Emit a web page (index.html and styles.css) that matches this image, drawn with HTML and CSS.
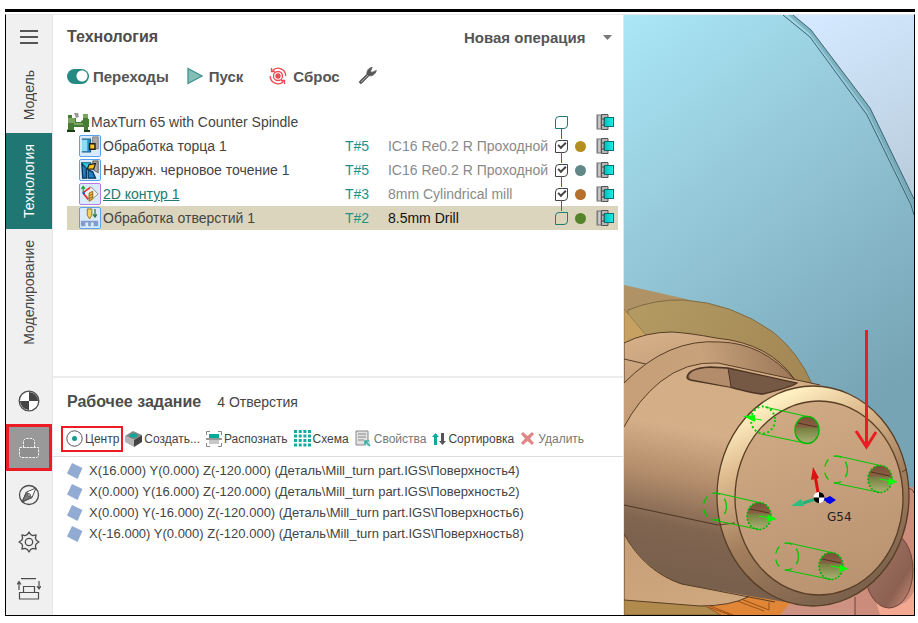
FILE: index.html
```html
<!DOCTYPE html>
<html lang="ru">
  <head>
    <meta charset="utf-8" />
    <meta name="viewport" content="width=device-width, initial-scale=1" />
    <title>Технология</title>
    <link rel="stylesheet" href="styles.css">
  </head>
  <body>
    <!-- Общие иконки -->
    <svg class="sprite" aria-hidden="true">
      <defs>
        <linearGradient id="metal" x1="0" y1="0" x2="1" y2="0">
          <stop offset="0" stop-color="#666" />
          <stop offset=".4" stop-color="#ddd" />
          <stop offset="1" stop-color="#777" />
        </linearGradient>
        <linearGradient id="cyan" x1="0" y1="0" x2="1" y2="0">
          <stop offset="0" stop-color="#00bfb8" />
          <stop offset="1" stop-color="#1cf0ea" />
        </linearGradient>
      </defs>
      <symbol id="chuck" viewBox="0 0 18 18">
        <rect x="1" y="2" width="5" height="14" fill="url(#metal)" stroke="#777" />
        <path d="M5.500 1.500H12V5H8V13H12V16.500H5.500Z" fill="#b5b5b5" stroke="#555" />
        <path d="M6 6h4M6 12h4" stroke="#444" />
        <rect x="8.500" y="4.500" width="9" height="9" fill="url(#cyan)" stroke="#0f6f70" />
      </symbol>
      <symbol id="surface" viewBox="0 0 16 18">
        <path d="M5 1 15.500 6 10.500 17 0 11.500Z" fill="#92abd3" />
      </symbol>
    </svg>

    <div class="page">
      <div class="app">
        <!-- Боковая панель -->
        <nav class="sidebar" aria-label="Разделы">
          <button class="sidebar__menu" aria-label="Меню">
            <svg width="18" height="14" viewBox="0 0 18 14"><path d="M0 1h18M0 7h18M0 13h18" stroke="#555" stroke-width="2" /></svg>
          </button>
          <button class="tab"><span>Модель</span></button>
          <button class="tab tab--active"><span>Технология</span></button>
          <button class="tab"><span>Моделирование</span></button>

          <div class="sidebar__tools">
            <button class="tool" aria-label="Система координат">
              <svg width="22" height="22" viewBox="0 0 22 22">
                <circle cx="11" cy="11" r="9.800" fill="#fff" stroke="#4c4c4c" stroke-width="1.300" />
                <path d="M11 11V2a9 9 0 0 1 9 9ZM11 11v9a9 9 0 0 1-9-9Z" fill="#444" />
              </svg>
            </button>
            <button class="tool tool--active" aria-label="Рабочее задание">
              <svg width="20" height="22" viewBox="0 0 20 22" fill="#8f8f8f" stroke="#f4f4f4" stroke-dasharray="2.500 1">
                <path d="M4.500 10.500v-7l2-2h7l2 2v7Z" />
                <path d="M.5 10.500h19v8l-1.500 2H2l-1.500-2Z" />
              </svg>
            </button>
            <button class="tool" aria-label="Подходы">
              <svg width="22" height="22" viewBox="0 0 22 22" stroke="#4c4c4c">
                <circle cx="11" cy="11" r="9.500" fill="none" stroke-width="1.300" />
                <path d="M18 4 8.500 8 4 18 14 13.500Z" fill="#fff" />
                <path d="M4 18 8.500 8 14 13.500Z" fill="#777" />
                <circle cx="11" cy="11" r="1.300" fill="#fff" />
              </svg>
            </button>
            <button class="tool" aria-label="Параметры">
              <svg width="22" height="22" viewBox="0 0 22 22" fill="none" stroke="#4c4c4c" stroke-width="1.300" stroke-linejoin="round">
                <path d="M9.300 3.700 11 1l1.700 2.700 2.300.9 3.100-.7-.7 3.100.9 2.300L21 11l-2.700 1.700-.9 2.300.7 3.100-3.100-.7-2.300.9L11 21l-1.700-2.700-2.300-.9-3.100.7.7-3.100-.9-2.300L1 11l2.700-1.700.9-2.300-.7-3.100 3.100.7Z" />
                <circle cx="11" cy="11" r="3.700" />
              </svg>
            </button>
            <button class="tool" aria-label="Подвод и отвод">
              <svg width="24" height="22" viewBox="0 0 24 22" fill="none" stroke="#4c4c4c" stroke-width="1.200">
                <path d="M4 .7h15M6.500 14V8.500h11V14M2.500 14.500h19v6.500h-19ZM2 12V4M0 6.500 2 3.500l2 3M22 3v8M20 8l2 3 2-3" />
              </svg>
            </button>
          </div>
        </nav>

        <main class="panel">
          <!-- Операции -->
          <section class="operations">
            <header class="operations__head">
              <h1 class="title">Технология</h1>
              <div class="dropdown">
                <select class="dropdown__select" aria-label="Новая операция">
                  <option>Новая операция</option>
                </select>
                <svg class="dropdown__arrow" width="9" height="5" viewBox="0 0 9 5"><path d="M0 0h9L4.500 5Z" fill="#777" /></svg>
              </div>
            </header>

            <div class="actions">
              <label class="action action--switch"><input class="switch" type="checkbox" checked>Переходы</label>
              <button class="action action--run">
                <svg width="16" height="18" viewBox="0 0 16 18"><path d="M1 1.500 15 9 1 16.500Z" fill="#83beb7" stroke="#3d958c" stroke-width="1.300" /></svg>Пуск
              </button>
              <button class="action action--reset">
                <svg width="18" height="18" viewBox="0 0 18 18" fill="none" stroke="#ec4a50" stroke-width="1.300">
                  <circle cx="9" cy="9" r="4.500" /><circle cx="9" cy="9" r="2" fill="#ec4a50" />
                  <path d="M3.500 3.500a7.800 7.800 0 0 1 13.300 5.500M14.500 14.500A7.800 7.800 0 0 1 1.200 9M2.500 1v3.500H6M15.500 17v-3.500H12" />
                </svg>Сброс
              </button>
              <button class="action" aria-label="Настройка">
                <svg width="20" height="20" viewBox="0 0 20 20"><path d="M2.500 17.500 9.500 10M18.300 4.500c-1.200 4-4 5.800-7.300 5.200L4 17c-1.500 1.500-3.500-.5-2.200-2L9 8.200C8.500 4.800 10.500 2 14.200 1.400L12.500 5l1.300 1.600Z" fill="#555" stroke="#666" /><path d="m3 16 7-7" stroke="#aaa" /></svg>
              </button>
            </div>

            <table class="ops">
              <colgroup>
                <col>
                <col class="ops__col-tool">
                <col class="ops__col-desc">
                <col class="ops__col-check">
                <col class="ops__col-dot">
                <col class="ops__col-chuck">
              </colgroup>
              <tbody>
                <tr>
                  <td class="ops__name ops__name--root" colspan="3"><div>
                    <svg width="23" height="22" viewBox="0 0 23 22">
                      <path d="M1 4h4v3h4v4h5v-1l2-1V3h5v5h1v8h-1v3h2v2h-6v-5H7v3h1v2H0v-2l1-1Z" fill="#477c36" />
                      <path d="M1 7h7v5H1ZM16 3h5v4h-5ZM7 12h9v2H7Z" fill="#7ba45f" />
                      <path d="M7 2h4l1 4-3 1Z" fill="#999" /><path d="M0 19h8v2H0ZM17 19h6v2h-6Z" fill="#183f13" />
                    </svg>MaxTurn 65 with Counter Spindle
                  </div></td>
                  <td class="ops__check"><input type="checkbox" aria-label="MaxTurn 65 with Counter Spindle"></td>
                  <td class="ops__dot"></td>
                  <td class="ops__chuck"><svg width="18" height="18"><use href="#chuck" /></svg></td>
                </tr>
                <tr>
                  <td class="ops__name"><div>
                    <svg class="op-icon" width="22" height="22" viewBox="0 0 22 22">
                      <path d="M2 4h9v13H2Z" fill="#8adcf5" /><path d="M8 4h3v13H8Z" fill="#2196c8" /><path d="M2 3.500h10M2 17.500h10M11.500 4v14" stroke="#155f8c" stroke-width="1.400" />
                      <path d="M14 1h6v13h-4V8h-2Z" fill="#aaa" stroke="#777" /><path d="M10.500 8.500h6v6h-6Z" fill="#f7c526" stroke="#222" stroke-width="1.600" />
                    </svg><span>Обработка торца 1</span>
                  </div></td>
                  <td class="ops__tool">T#5</td>
                  <td class="ops__desc">IC16 Re0.2 R Проходной</td>
                  <td class="ops__check"><input type="checkbox" checked aria-label="Обработка торца 1"></td>
                  <td class="ops__dot"><i class="dot dot--gold"></i></td>
                  <td class="ops__chuck"><svg width="18" height="18"><use href="#chuck" /></svg></td>
                </tr>
                <tr>
                  <td class="ops__name"><div>
                    <svg class="op-icon" width="22" height="22" viewBox="0 0 22 22">
                      <path d="M2 4 7 9v11H3ZM9 11l5 2 3 7H9Z" fill="#277dbb" stroke="#07385e" stroke-width="1.500" />
                      <path d="M2 3h10l-4 7Z" fill="#25d1df" stroke="#0b5474" /><path d="M14 1h6v13l-5-3Z" fill="#aaa" stroke="#555" />
                      <path d="m10 5 7-1-2 6H8Z" fill="#f7c526" stroke="#222" stroke-width="1.400" />
                    </svg><span>Наружн. черновое точение 1</span>
                  </div></td>
                  <td class="ops__tool">T#5</td>
                  <td class="ops__desc">IC16 Re0.2 R Проходной</td>
                  <td class="ops__check"><input type="checkbox" checked aria-label="Наружн. черновое точение 1"></td>
                  <td class="ops__dot"><i class="dot dot--steel"></i></td>
                  <td class="ops__chuck"><svg width="18" height="18"><use href="#chuck" /></svg></td>
                </tr>
                <tr>
                  <td class="ops__name"><div>
                    <svg class="op-icon op-icon--mill" width="22" height="22" viewBox="0 0 22 22" fill="none">
                      <path d="m4 10 8-7 8 8-8 7Z" fill="#f0f0f0" stroke="#888" />
                      <path d="M3.500 9V3M1.500 5.500l2-3 2 3" stroke="#1f9b34" stroke-width="1.300" /><path d="m4 9 7-5M4 11l5 6" stroke="#e22" stroke-width="1.500" />
                      <path d="m10 10 4-2v8l-4 3Z" fill="#f4bf3d" stroke="#886012" /><path d="m10 13 4-2m-4 5 4-2" stroke="#886012" /><circle cx="4" cy="10" r="1.500" fill="#25c" />
                    </svg><a class="op-link" href="#">2D контур 1</a>
                  </div></td>
                  <td class="ops__tool">T#3</td>
                  <td class="ops__desc">8mm Cylindrical mill</td>
                  <td class="ops__check"><input type="checkbox" checked aria-label="2D контур 1"></td>
                  <td class="ops__dot"><i class="dot dot--copper"></i></td>
                  <td class="ops__chuck"><svg width="18" height="18"><use href="#chuck" /></svg></td>
                </tr>
                <tr class="ops__row--selected">
                  <td class="ops__name"><div>
                    <svg class="op-icon" width="22" height="22" viewBox="0 0 22 22">
                      <path d="M1 14h19v6h-5v-4h-3v4H9v-4H6v4H1Z" fill="#829dcb" />
                      <path d="M8 1h5v7l-2.500 4L8 8Z" fill="#f5d267" stroke="#8b7029" /><path d="M16.500 1v9m-2-3 2 3 2-3" stroke="#22803c" stroke-width="1.400" fill="none" />
                    </svg><span>Обработка отверстий 1</span>
                  </div></td>
                  <td class="ops__tool">T#2</td>
                  <td class="ops__desc">8.5mm Drill</td>
                  <td class="ops__check"><input type="checkbox" aria-label="Обработка отверстий 1"></td>
                  <td class="ops__dot"><i class="dot dot--green"></i></td>
                  <td class="ops__chuck"><svg width="18" height="18"><use href="#chuck" /></svg></td>
                </tr>
              </tbody>
            </table>
          </section>

          <!-- Рабочее задание -->
          <section class="job">
            <header class="job__head">
              <h2 class="title">Рабочее задание</h2>
              <span class="job__count">4 Отверстия</span>
            </header>
            <div class="toolbar">
              <button class="toolbar__btn toolbar__btn--marked">
                <svg width="17" height="17" viewBox="0 0 17 17"><circle cx="8.500" cy="8.500" r="7.700" fill="#fff" stroke="#555" /><circle cx="8.500" cy="8.500" r="2.500" fill="#179b8d" /></svg>Центр
              </button>
              <button class="toolbar__btn">
                <svg width="17" height="17" viewBox="0 0 17 17"><path d="m0 6 8-5 9 4-8 5Z" fill="#888" /><path d="m0 6 9 4v7l-9-5Z" fill="#b4b4b4" /><path d="m9 10 8-5v7l-8 5Z" fill="#444" /><ellipse cx="8.500" cy="5.500" rx="4" ry="2" fill="#0ba798" /></svg>Создать...
              </button>
              <button class="toolbar__btn">
                <svg width="16" height="16" viewBox="0 0 16 16"><path d="M4 .5H.5V4M12 .5h3.500V4M4 15.500H.5V12M12 15.500h3.500V12" fill="none" stroke="#888" /><path d="M3 3h10v4H3Z" fill="#0ba798" /><path d="M0 7h16v2H0Z" fill="#999" /><path d="M3 9h10v4H3Z" fill="#c7c7c7" /></svg>Распознать
              </button>
              <button class="toolbar__btn">
                <svg width="17" height="17" viewBox="0 0 17 17"><path d="M1.500 0v17M6.200 0v17M10.900 0v17M15.500 0v17" stroke="#18aaa0" stroke-width="3" stroke-dasharray="3 1.500" /></svg>Схема
              </button>
              <button class="toolbar__btn toolbar__btn--off">
                <svg width="16" height="17" viewBox="0 0 16 17"><path d="M1 1h12v14H1Z" fill="#e2e2e2" stroke="#888" /><path d="M3 4h8M3 7h8M3 10h6" stroke="#888" /><path d="M9 10h6v6H9Z" fill="#cde5e2" /><path d="m10 11 5 5m-5-1v-4h4" stroke="#3aaea3" stroke-width="1.600" fill="none" /></svg>Свойства
              </button>
              <button class="toolbar__btn">
                <svg width="14" height="14" viewBox="0 0 14 14"><path d="M2 13V5H0l3.500-4L7 5H5v8Z" fill="#12a99d" /><path d="M9 1v8H7l3.500 4L14 9h-2V1Z" fill="#555" /></svg>Сортировка
              </button>
              <button class="toolbar__btn toolbar__btn--off">
                <svg width="15" height="15" viewBox="0 0 15 15"><path d="M1 3 3 1l4.500 4L12 1l2 2-4 4.500 4 4.500-2 2-4.500-4L3 14l-2-2 4-4.500Z" fill="#e08785" /></svg>Удалить
              </button>
            </div>
            <ul class="holes">
              <li><svg width="16" height="18"><use href="#surface" /></svg>X(16.000) Y(0.000) Z(-120.000) (Деталь\Mill_turn part.IGS\Поверхность4)</li>
              <li><svg width="16" height="18"><use href="#surface" /></svg>X(0.000) Y(16.000) Z(-120.000) (Деталь\Mill_turn part.IGS\Поверхность2)</li>
              <li><svg width="16" height="18"><use href="#surface" /></svg>X(0.000) Y(-16.000) Z(-120.000) (Деталь\Mill_turn part.IGS\Поверхность6)</li>
              <li><svg width="16" height="18"><use href="#surface" /></svg>X(-16.000) Y(0.000) Z(-120.000) (Деталь\Mill_turn part.IGS\Поверхность8)</li>
            </ul>
          </section>
        </main>

        <!-- 3D-вид -->
        <div class="view">
          <svg class="view__scene" viewBox="624 15 290 600" preserveAspectRatio="xMidYMid slice" role="img" aria-label="3D-модель детали">
            <defs>
              <linearGradient id="sky" gradientUnits="userSpaceOnUse" x1="820" y1="15" x2="914" y2="190">
                <stop offset="0" stop-color="#d4e9ff" /><stop offset="1" stop-color="#b8ccdc" />
              </linearGradient>
              <linearGradient id="disc" gradientUnits="userSpaceOnUse" x1="624" y1="15" x2="900" y2="380">
                <stop offset="0" stop-color="#aae7f7" /><stop offset=".4" stop-color="#97cbdb" /><stop offset="1" stop-color="#76a4b5" />
              </linearGradient>
              <linearGradient id="ring" gradientUnits="userSpaceOnUse" x1="640" y1="300" x2="800" y2="390">
                <stop offset="0" stop-color="#b29a62" /><stop offset="1" stop-color="#a38755" />
              </linearGradient>
              <linearGradient id="back" gradientUnits="userSpaceOnUse" x1="650" y1="330" x2="720" y2="600">
                <stop offset="0" stop-color="#d5b088" /><stop offset=".3" stop-color="#ba9370" /><stop offset="1" stop-color="#cfa77e" />
              </linearGradient>
              <linearGradient id="flange" gradientUnits="userSpaceOnUse" x1="624" y1="400" x2="790" y2="370">
                <stop offset="0" stop-color="#c69f79" /><stop offset=".5" stop-color="#c8a27b" /><stop offset="1" stop-color="#9d795b" />
              </linearGradient>
              <linearGradient id="body" gradientUnits="userSpaceOnUse" x1="705" y1="370" x2="665" y2="570">
                <stop offset="0" stop-color="#d3ad86" /><stop offset=".3" stop-color="#d5af88" /><stop offset=".55" stop-color="#b28c6b" /><stop offset=".78" stop-color="#806550" /><stop offset="1" stop-color="#79604d" />
              </linearGradient>
              <linearGradient id="rim" gradientUnits="userSpaceOnUse" x1="755" y1="410" x2="850" y2="600">
                <stop offset="0" stop-color="#fff0c2" /><stop offset=".22" stop-color="#dfbb8f" /><stop offset=".55" stop-color="#a47f5e" /><stop offset="1" stop-color="#79604b" />
              </linearGradient>
              <linearGradient id="face" gradientUnits="userSpaceOnUse" x1="780" y1="400" x2="850" y2="595">
                <stop offset="0" stop-color="#d0ab84" /><stop offset="1" stop-color="#b99271" />
              </linearGradient>
              <linearGradient id="bore" x1="0" y1="0" x2="0" y2="1">
                <stop offset="0" stop-color="#795038" /><stop offset=".4" stop-color="#8a6045" /><stop offset=".42" stop-color="#758040" /><stop offset="1" stop-color="#aab073" />
              </linearGradient>
              <linearGradient id="ball" x1="0" y1="0" x2="1" y2="1">
                <stop offset="0" stop-color="#a77967" /><stop offset=".7" stop-color="#8c6152" /><stop offset="1" stop-color="#d18f7b" />
              </linearGradient>
              <g id="drill">
                <ellipse rx="12" ry="13.500" fill="url(#bore)" />
                <path d="M-9-7 10-3" stroke="#54341f" />
                <path d="M-42-23 0-13.500M-46 4 0 13.500" stroke="#00c800" />
                <ellipse cx="-44" cy="-9.500" rx="11.500" ry="13.500" fill="none" stroke="#00c800" stroke-width="1.300" stroke-dasharray="8 6" />
                <ellipse rx="12" ry="13.500" fill="none" stroke="#00b400" stroke-width="1.600" stroke-dasharray="2 1.500" />
                <path d="M0 0 10 2" stroke="#0f0" /><path d="m9-1 9 4-10 3Z" fill="#0f0" />
              </g>
            </defs>

            <rect x="624" y="15" width="290" height="600" fill="url(#sky)" />
            <path d="M624 15H793L811 30 870 108 914 199V615H624Z" fill="url(#disc)" />
            <path d="M788 15 810 34 868 112 914 208V199L870 108 811 30 793 15Z" fill="#6da0ac" opacity=".6" />
            <path d="m793 15 18 15 59 78 44 91M783 15l27 22 57 78 44 90 3 10" fill="none" stroke="#3d6470" />

            <!-- Задние детали -->
            <path d="M624 285 686 299 720 310V350H624Z" fill="#af9265" />
            <path d="M628 310Q655 299 684 300 732 303 773 332 799 353 812 384L700 420 624 400Z" fill="url(#ring)" stroke="#806a45" />
            <path d="M624 309 646 335 624 350Z" fill="#c6a161" stroke="#8d7040" stroke-width=".7" />
            <path d="M868 487H914V615H780Z" fill="#cb8c7b" />
            <path d="M780 590 855 590V615H780Z" fill="#cd9281" />
            <path d="M905 488Q913 488 914 493M855 597V615" fill="none" stroke="#694438" />
            <path d="M868 575Q875 608 890 608 910 604 914 590V615H880Z" fill="#f2a891" />
            <ellipse cx="889" cy="570" rx="24" ry="38" fill="url(#ball)" stroke="#6f4436" />
            <path d="M624 590H790V603L780 615H624Z" fill="#e18637" />
            <path d="m708 607 22 8m2-16 32 12m-23-12 28 11v-8m-61 3 35 14" fill="none" stroke="#985019" />
            <path d="M624 598 705 606 721 615H624Z" fill="#b18b4d" stroke="#866239" />
            <path d="M624 343Q646 332 672 332 690 333 716 338 770 343 795 380L748 597Q730 606 700 606L624 600Z" fill="url(#back)" stroke="#583e25" />
            <path d="m624 359 26 6" stroke="#583e25" />
            <path d="M624 383Q668 338 720 342 763 343 795 380L720 430 624 460Z" fill="url(#flange)" />
            <path d="M624 383Q668 338 720 342 763 343 795 380" fill="none" stroke="#583e25" />

            <!-- Деталь -->
            <path d="M624 427Q638 400 660 382 686 361 718 363L820 385 808 606 680 584Q645 570 624 534Z" fill="url(#body)" />
            <path d="M624 427Q638 400 660 382 686 361 718 363L820 385M624 534Q645 572 682 584L775 602" fill="none" stroke="#583e25" />
            <path d="m624 505 94 20" stroke="#4d3523" />
            <path d="M687 377Q689 368 710 367L728 368 797 383Q792 387 763 394 755 394 730 387L690 380Q687 379 687 377Z" fill="#765944" stroke="#4d3523" stroke-width="1.300" />
            <path d="M689 376Q691 369 710 368L728 369 731 387 690 379Z" fill="#b28c6b" />
            <path d="m728 368 3 19" stroke="#4d3523" />
            <ellipse cx="813" cy="496" rx="96" ry="110" fill="url(#rim)" stroke="#583e25" stroke-width="1.300" />
            <ellipse cx="819" cy="498" rx="84" ry="97" fill="url(#face)" stroke="#583e25" stroke-width="1.300" />
            <path d="m718 525 17-2M902 472l5-3" stroke="#583e25" />

            <!-- Отверстия -->
            <ellipse cx="807" cy="430" rx="12" ry="13.500" fill="url(#bore)" stroke="#00b400" stroke-width="1.400" />
            <path d="m798 423 19 4" stroke="#54341f" />
            <path d="m765 407 42 9.500M761 434l46 9.500" stroke="#00c800" />
            <ellipse cx="763" cy="420" rx="12" ry="13.500" fill="none" stroke="#00cd00" stroke-width="2" stroke-dasharray="2 2.500" />
            <path d="m762 420-14-2" stroke="#0f0" /><path d="m743 416 12-1v7Z" fill="#0f0" />
            <use href="#drill" x="880" y="479" />
            <use href="#drill" x="759" y="516" />
            <use href="#drill" x="831" y="566" />

            <!-- Система координат G54 -->
            <path d="m819 498-4-23" stroke="#e01010" stroke-width="3" /><path d="m813 467 6 11-8 2Z" fill="#e01010" />
            <path d="m819 498-16 5" stroke="#28b078" stroke-width="3" /><path d="m791 506 10-7 3 7Z" fill="#28c080" />
            <path d="m819 498 10 2" stroke="#0000c8" stroke-width="3" /><path d="m826 498 4-2 6 4-6 4-4-2Z" fill="#0000e8" />
            <circle cx="819" cy="497.500" r="5.500" fill="#fff" />
            <path d="M819 497.500V492a5.500 5.500 0 0 1 5.500 5.500ZM819 497.500v5.500a5.500 5.500 0 0 1-5.500-5.500Z" fill="#000" />
            <text class="view__label" x="827" y="521">G54</text>

            <path d="M866.500 330V446M856 431l10.500 16L876 432" fill="none" stroke="#ed1c24" stroke-width="3" />
          </svg>
        </div>
      </div>
    </div>
  </body>
</html>
```
FILE: styles.css
```css
*, *::before, *::after {
  box-sizing: border-box;
}

body {
  margin: 0;
  background: #fff;
  color: #444;
  font-family: 'Liberation Sans', Arial, sans-serif;
  font-size: 14px;
}

button {
  margin: 0;
  padding: 0;
  border: 0;
  background: none;
  color: inherit;
  font: inherit;
  cursor: pointer;
}

svg {
  display: block;
  flex: none;
}

.sprite {
  position: absolute;
  width: 0;
  height: 0;
}

.page {
  display: flex;
  flex-direction: column;
  gap: 2px;
  min-height: 100vh;
  padding: 9px 3px 7px 5px;
}

.page::before {
  content: '';
  height: 3px;
  background: #000;
}

.app {
  flex: 1;
  display: grid;
  grid-template-columns: 46px minmax(0, 572fr) minmax(0, 290fr);
  border: 1px solid #000;
  border-top-color: #e8e8e8;
}

/* Боковая панель */
.sidebar {
  display: flex;
  flex-direction: column;
  align-items: stretch;
  background: #f0f0f0;
}

.sidebar__menu {
  display: flex;
  align-items: center;
  justify-content: center;
  height: 44px;
}

.tab {
  display: flex;
  align-items: center;
  justify-content: center;
  padding: 11px 0;
  line-height: 20px;
}

.tab span {
  writing-mode: vertical-rl;
  transform: rotate(180deg);
}

.tab--active {
  margin-top: 2px;
  background: #207672;
  color: #fff;
}

.sidebar__tools {
  display: flex;
  flex-direction: column;
  margin-top: auto;
  padding-bottom: 3px;
}

.tool {
  display: flex;
  align-items: center;
  justify-content: center;
  height: 47px;
}

.tool--active {
  border: 3px solid #ed1c24;
  background: #999;
}

/* Панель операций */
.panel {
  display: flex;
  flex-direction: column;
  border-left: 1px solid #e6e6e6;
  border-right: 1px solid #e6e6e6;
}

.title {
  margin: 0;
  color: #4c4c4c;
  font-size: 16px;
  font-weight: bold;
}

.operations {
  height: 363px;
  padding: 0 5px 0 14px;
  border-bottom: 2px solid #ececec;
}

.operations__head {
  display: flex;
  align-items: center;
  justify-content: space-between;
  height: 44px;
}

.dropdown {
  display: grid;
  align-items: center;
  color: #555;
  font-size: 15px;
  font-weight: bold;
}

.dropdown__select {
  grid-area: 1 / 1;
  padding: 0 32px 0 0;
  border: 0;
  background: none;
  color: inherit;
  font: inherit;
  appearance: none;
}

.dropdown__arrow {
  grid-area: 1 / 1;
  justify-self: end;
  margin-right: 6px;
  pointer-events: none;
}

.actions {
  display: flex;
  align-items: center;
  gap: 18px;
  height: 34px;
  margin-bottom: 17px;
  color: #555;
  font-size: 15px;
  font-weight: bold;
}

.action {
  display: flex;
  align-items: center;
  gap: 6px;
}

.action--reset {
  margin-left: 8px;
}

.action--switch {
  gap: 4px;
}

.switch {
  width: 22px;
  height: 15px;
  margin: 0;
  border-radius: 8px;
  background: radial-gradient(circle at 15px 7px, #fff 5px, #258984 6px);
  appearance: none;
}

.ops {
  width: 100%;
  border-collapse: collapse;
  table-layout: fixed;
}

.ops tr {
  height: 24px;
}

.ops td {
  padding: 0;
  white-space: nowrap;
}

.ops__name > div {
  display: flex;
  align-items: center;
  gap: 2px;
  padding-left: 12px;
}

.ops__name--root > div {
  gap: 1px;
  padding-left: 0;
}

.op-icon {
  border: 1px solid #5ba2ec;
  border-radius: 2px;
  background: #d9eafa;
}

.op-icon--mill {
  border-color: #b77be8;
}

.op-link {
  color: #207a70;
}

.ops__col-tool {
  width: 43px;
}

.ops__col-desc {
  width: 164px;
}

.ops__col-check {
  width: 20px;
}

.ops__col-dot {
  width: 24px;
}

.ops__col-chuck {
  width: 22px;
}

.ops__tool {
  color: #229387;
}

.ops__desc {
  color: #8a8a8a;
  overflow: hidden;
}

.ops__check {
  position: relative;
}

.ops__check input {
  display: grid;
  place-items: center;
  width: 13px;
  height: 13px;
  margin: 0 0 0 3px;
  border: 1px solid #207a75;
  border-radius: 4px 0;
  appearance: none;
}

.ops__check input:checked {
  border-color: #444;
}

.ops__check input:checked::after {
  content: '';
  width: 8px;
  height: 5px;
  margin-bottom: 3px;
  border: solid #444;
  border-width: 0 0 2px 2px;
  transform: rotate(-45deg);
}

/* Связь между операциями */
.ops tr + tr .ops__check::before {
  content: '';
  position: absolute;
  top: -6px;
  left: 9px;
  width: 1px;
  height: 11px;
  background: #f02020;
}

.ops__row--selected {
  background: #dcd5bd;
}

.ops__row--selected .ops__desc {
  color: #111;
}

.dot {
  display: block;
  width: 11px;
  height: 11px;
  margin-left: 3px;
  border-radius: 50%;
}

.dot--gold {
  background: #b48e1e;
}

.dot--steel {
  background: #618788;
}

.dot--copper {
  background: #b5702e;
}

.dot--green {
  background: #55832a;
}

/* Рабочее задание */
.job__head {
  display: flex;
  align-items: center;
  gap: 16px;
  height: 48px;
  padding-left: 14px;
}

.toolbar {
  display: flex;
  align-items: center;
  gap: 6px;
  height: 31px;
  padding: 0 8px 5px;
  border-bottom: 1px solid #ddd;
  font-size: 12px;
}

.toolbar__btn {
  display: flex;
  align-items: center;
  gap: 2px;
  white-space: nowrap;
}

.toolbar__btn--marked {
  height: 26px;
  padding: 0 2px 0 3px;
  border: 2px solid #ed1c24;
  margin-right: -4px;
}

.toolbar__btn--off {
  gap: 3px;
  color: #777;
}

.holes {
  margin: 0;
  padding: 3px 14px;
  list-style: none;
  font-size: 13px;
}

.holes li {
  display: flex;
  align-items: center;
  gap: 6px;
  height: 21px;
}

/* 3D-вид */
.view {
  position: relative;
  overflow: hidden;
}

.view__scene {
  position: absolute;
  inset: 0;
  width: 100%;
  height: 100%;
}

.view__label {
  fill: #222;
  font-family: 'DejaVu Sans', Verdana, sans-serif;
  font-size: 12px;
}
```
